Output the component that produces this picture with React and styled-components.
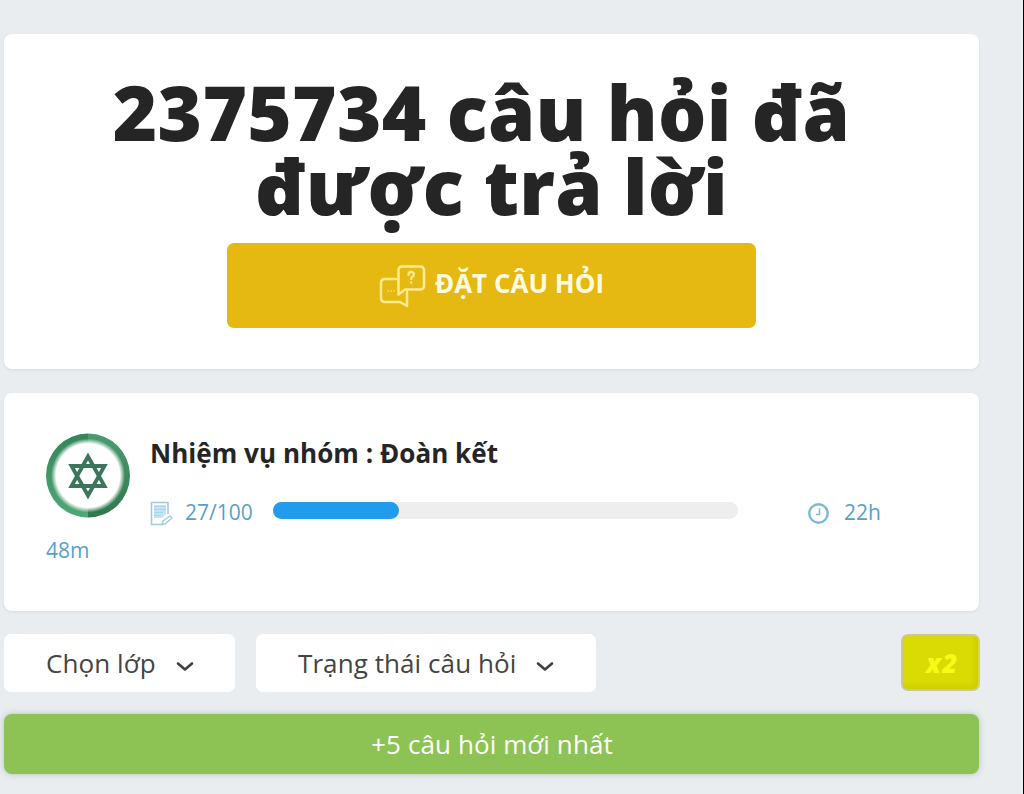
import React from "react";
import styled, { createGlobalStyle } from "styled-components";

const GlobalStyle = createGlobalStyle`
    * {
        box-sizing: border-box;
    }
    body {
        margin: 0;
        background: #e9edf0;
        font-family: "Open Sans", "Noto Sans", sans-serif;
        color: #252525;
    }
`;

const Page = styled.div`
    height: 794px;
    padding: 34px 44px 0 4px;
    border-right: 1px solid #000;
    overflow: hidden;
`;

const Card = styled.section`
    height: ${(props) => props.$height}px;
    margin-bottom: ${(props) => props.$space}px;
    background: #fff;
    border-radius: 8px;
    box-shadow: 0 1px 3px rgba(60, 80, 80, 0.1);
`;

const AskCard = styled(Card)`
    display: flex;
    flex-direction: column;
    align-items: center;
    padding-top: 41px;
`;

const Title = styled.h1`
    margin: 0 0 20px;
    font-size: 76px;
    font-weight: 800;
    letter-spacing: 0.3px;
    line-height: 74px;
    text-align: center;
    white-space: nowrap;
`;

const AskButton = styled.button`
    display: flex;
    align-items: center;
    justify-content: center;
    gap: 9px;
    width: 529px;
    height: 85px;
    padding: 0 0 5px;
    border: 0;
    border-radius: 7px;
    background: #e5b812;
    color: #fffbe0;
    font-family: inherit;
    font-size: 26px;
    font-weight: 700;

    & svg {
        margin-top: 6px;
    }
`;

const TaskCard = styled(Card)`
    display: grid;
    grid-template-columns: 105px 1fr;
    grid-template-rows: 104px 27px;
    align-content: start;
    padding: 40px 42px 0;
`;

const TaskTitle = styled.h2`
    margin: 0 0 0 -1px;
    font-size: 26px;
    font-weight: 700;
    letter-spacing: 0.05px;
    line-height: 40px;
    white-space: nowrap;
`;

const Stats = styled.div`
    display: flex;
    align-items: center;
    height: 30px;
    margin-top: 24px;
`;

const StatText = styled.span`
    width: ${(props) => props.$width}px;
    color: #5a9fcb;
    font-size: 21px;
    line-height: 27px;
    white-space: nowrap;
`;

const Track = styled.div`
    width: 465px;
    height: 17px;
    margin: 0 70px 3px 0;
    border-radius: 9px;
    background: #eeeeee;
`;

const Fill = styled.div`
    height: 100%;
    border-radius: 9px;
    background: #219bee;
`;

const Filters = styled.div`
    display: flex;
    gap: 21px;
    height: 58px;
    margin-bottom: 22px;
`;

const Select = styled.button`
    display: flex;
    align-items: center;
    gap: 20px;
    width: ${(props) => props.$width}px;
    padding: 0 0 0 42px;
    border: 0;
    border-radius: 7px;
    background: #fff;
    color: #444;
    font-family: inherit;
    font-size: 26px;
    letter-spacing: 0.08px;
    white-space: nowrap;

    & svg {
        margin-top: 6px;
    }
`;

const Bonus = styled.div`
    display: flex;
    align-items: center;
    justify-content: center;
    width: 79px;
    height: 57px;
    margin: 0 -1px 0 auto;
    padding-left: 4px;
    border: 2px solid #c8c6a4;
    border-right-color: #d8d848;
    border-radius: 7px;
    background: #dada04;
    box-shadow: inset -3px -3px 5px rgba(175, 175, 0, 0.3);
    color: #f6fa14;
    font-size: 26px;
    font-style: italic;
    font-weight: 800;
    letter-spacing: 1.5px;
`;

const Newest = styled.button`
    display: block;
    width: 100%;
    height: 60px;
    padding: 0 0 0 1px;
    border: 0;
    border-radius: 8px;
    background: #8dc355;
    box-shadow: 0 0 6px rgba(70, 90, 80, 0.3);
    color: #fff;
    font-family: inherit;
    font-size: 26px;
    letter-spacing: 0.1px;
`;

const ChatIcon = () => (
    <svg width="47" height="43" viewBox="0 0 47 43" fill="none" stroke="#ffeb94" strokeWidth="2.500" strokeLinejoin="round" strokeLinecap="round">
        <path d="M23 1.500h18q4 0 4 4v15q0 4-4 4H26l-6.500 5V5q0-3.500 3.500-3.500Z" />
        <path d="M17 14H6q-4 0-4 4v15q0 4 4 4h15l7 4V27" />
        <path d="M29.500 10q0-3 2.700-3t2.700 2.500q0 1.500-1.500 2.200-1.200.6-1.200 2.300M32.200 17.500v.2" strokeWidth="2.300" />
        <path d="M9 26h.1M12 26h.1M15 26h.1" strokeWidth="1.500" />
    </svg>
);

const GroupBadge = () => (
    <svg width="84" height="86" viewBox="0 0 84 86">
        <defs>
            <linearGradient id="ringLight" x1="0" y1="0" x2="0" y2="1">
                <stop offset="0" stopColor="#35845a" />
                <stop offset="1" stopColor="#4fa876" />
            </linearGradient>
            <linearGradient id="ringDark" x1="0" y1="0" x2="0" y2="1">
                <stop offset="0" stopColor="#4c9b70" />
                <stop offset="1" stopColor="#2f774f" />
            </linearGradient>
            <radialGradient id="face">
                <stop offset="0.860" stopColor="#fff" />
                <stop offset="1" stopColor="#fff" stopOpacity="0" />
            </radialGradient>
        </defs>
        <path d="M42 0.500a42 42 0 0 0 0 84Z" fill="url(#ringLight)" />
        <path d="M42 0.500a42 42 0 0 1 0 84Z" fill="url(#ringDark)" />
        <circle cx="42" cy="42.500" r="37" fill="url(#face)" />
        <path d="M42 23.500L58.500 53H25.500ZM42 62.500L58.500 33H25.500Z" fill="none" stroke="#3b755b" strokeWidth="3.800" />
    </svg>
);

const NoteIcon = () => (
    <svg width="23" height="25" viewBox="0 0 23 25" fill="none" stroke="#9ccadf" strokeWidth="1.500">
        <path d="M18 13V1.500H1.500v22H13" />
        <path d="M4 4h12v9l-4 4H4Z" fill="#c3e6f6" stroke="none" />
        <path d="M4 5.500h12M4 8.500h12M4 11.500h9M4 14.500h7" stroke="#a6d6ee" strokeWidth="1" />
        <path d="M12 23l1-3 7-5 2 2-7 6Z" strokeWidth="1.300" />
    </svg>
);

const ClockIcon = () => (
    <svg width="22" height="22" viewBox="0 0 22 22" fill="none" stroke="#79b9d2">
        <circle cx="11.500" cy="11.500" r="9.200" strokeWidth="2.400" />
        <path d="M12.500 6.500v6H9" strokeWidth="1.500" />
    </svg>
);

const Chevron = () => (
    <svg width="18" height="11" viewBox="0 0 18 11" fill="none" stroke="#404040" strokeWidth="2.600" strokeLinecap="round" strokeLinejoin="round">
        <path d="M2 2.500l7 6 7-6" />
    </svg>
);

const IconSlot = styled.span`
    display: flex;
    width: ${(props) => props.$width}px;
    margin: 2px 1px 0 -1px;
`;

const App = () => {
    const done = 27;
    const total = 100;

    return (
        <>
            <GlobalStyle />
            <Page>
                <AskCard $height={335} $space={24}>
                    <Title>
                        2375734 câu hỏi đã&nbsp;
                        <br />
                        được trả lời
                    </Title>
                    <AskButton>
                        <ChatIcon />
                        ĐẶT CÂU HỎI
                    </AskButton>
                </AskCard>

                <TaskCard $height={218} $space={23}>
                    <GroupBadge />
                    <div>
                        <TaskTitle>Nhiệm vụ nhóm : Đoàn kết</TaskTitle>
                        <Stats>
                            <IconSlot $width={34}>
                                <NoteIcon />
                            </IconSlot>
                            <StatText $width={88}>
                                {done}/{total}
                            </StatText>
                            <Track>
                                <Fill style={{ width: `${(done / total) * 100}%` }} />
                            </Track>
                            <IconSlot $width={36}>
                                <ClockIcon />
                            </IconSlot>
                            <StatText $width={50}>22h</StatText>
                        </Stats>
                    </div>
                    <StatText $width={60}>48m</StatText>
                </TaskCard>

                <Filters>
                    <Select $width={231}>
                        Chọn lớp
                        <Chevron />
                    </Select>
                    <Select $width={340}>
                        Trạng thái câu hỏi
                        <Chevron />
                    </Select>
                    <Bonus>x2</Bonus>
                </Filters>

                <Newest>+5 câu hỏi mới nhất</Newest>
            </Page>
        </>
    );
};

export default App;
